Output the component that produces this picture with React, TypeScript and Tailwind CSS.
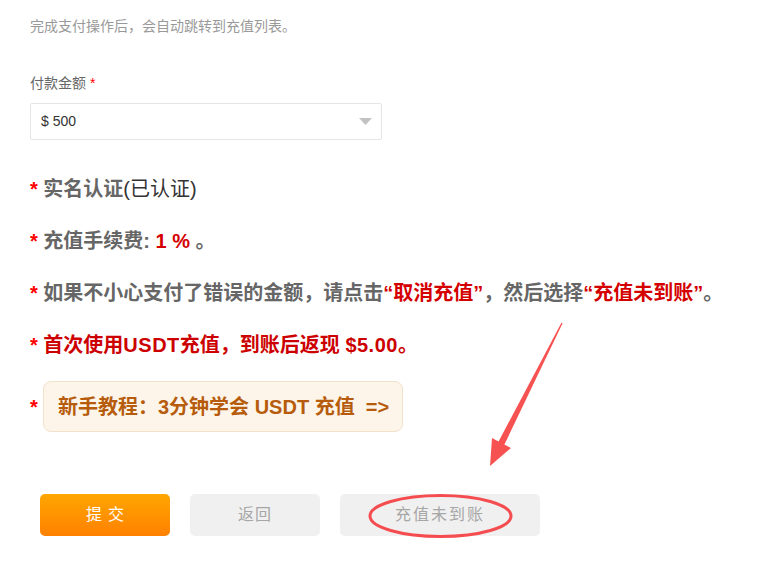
import React from "react";

export default function App() {
  const font = { fontFamily: '"Liberation Sans", Arial, "Noto Sans CJK SC", sans-serif' };
  return (
    <div className="relative w-[772px] h-[571px] bg-white overflow-hidden" style={font}>
      <div className="flex flex-col pl-[30px] pt-[16px]">
        <div className="text-[14px] leading-[20px] text-[#999]">完成支付操作后，会自动跳转到充值列表。</div>

        <div className="mt-[37px] text-[14px] leading-[20px] text-[#666]">
          付款金额 <span className="text-[#f00]">*</span>
        </div>

        <div className="mt-[10px] w-[352px] h-[37px] border border-[#e6e6e6] rounded-[2px] flex items-center justify-between pl-[10px] pr-[9px]">
          <span className="text-[14px] text-[#333]">$ 500</span>
          <svg width="13" height="7" viewBox="0 0 13 7">
            <polygon points="0,0 13,0 6.5,7" fill="#c2c2c2" />
          </svg>
        </div>

        <div className="mt-[34px] flex flex-col gap-[22px] text-[20px] leading-[30px] font-bold">
          <div className="text-[#666]">
            <span className="text-[#f00]">*</span> 实名认证<span className="font-normal text-[#333]">(已认证)</span>
          </div>
          <div className="text-[#666]">
            <span className="text-[#f00]">*</span> 充值手续费: <span className="text-[#d40000]">1 %</span> 。
          </div>
          <div className="text-[#666]">
            <span className="text-[#f00]">*</span> 如果不小心支付了错误的金额，请点击<span className="text-[#d40000]">“取消充值”</span>，然后选择<span className="text-[#d40000]">“充值未到账”</span>。
          </div>
          <div className="text-[#cc0000]">
            <span className="text-[#f00]">*</span> 首次使用<span className="tracking-[0.5px]">USDT</span>充值，到账后返现 <span className="tracking-[0.5px]">$5.00</span>。
          </div>
        </div>

        <div className="mt-[21px] flex items-center">
          <span className="text-[20px] font-bold text-[#f00] w-[13px]">*</span>
          <div className="h-[51px] w-[360px] rounded-[8px] border border-[#f2e2cc] bg-[#fdf5e9] flex items-center pl-[14px] text-[20px] font-bold text-[#b65c0c] whitespace-pre">
            新手教程：3分钟学会 USDT 充值  =&gt;
          </div>
        </div>

        <div className="mt-[62px] ml-[10px] flex gap-[20px]">
          <button className="w-[130px] h-[42px] rounded-[5px] bg-gradient-to-b from-[#ffa600] to-[#ff8000] text-white text-[16px] tracking-[6px] pl-[6px]">
            提交
          </button>
          <button className="w-[130px] h-[42px] rounded-[5px] bg-[#f0f0f0] text-[#a6a6a6] text-[16px] tracking-[1px]">
            返回
          </button>
          <button className="w-[200px] h-[42px] rounded-[5px] bg-[#f0f0f0] text-[#a6a6a6] text-[16px] tracking-[2px]">
            充值未到账
          </button>
        </div>
      </div>

      <svg className="absolute left-0 top-0 pointer-events-none" width="772" height="571" viewBox="0 0 772 571">
        <polygon
          points="561.4,322.8 498.6,441.4 492,438 490,466 511,448 504.4,444.6 562.6,323.2"
          fill="#f75252"
        />
        <ellipse cx="440.5" cy="516" rx="70.5" ry="20.5" fill="none" stroke="#f54c50" strokeWidth="3" />
      </svg>
    </div>
  );
}
